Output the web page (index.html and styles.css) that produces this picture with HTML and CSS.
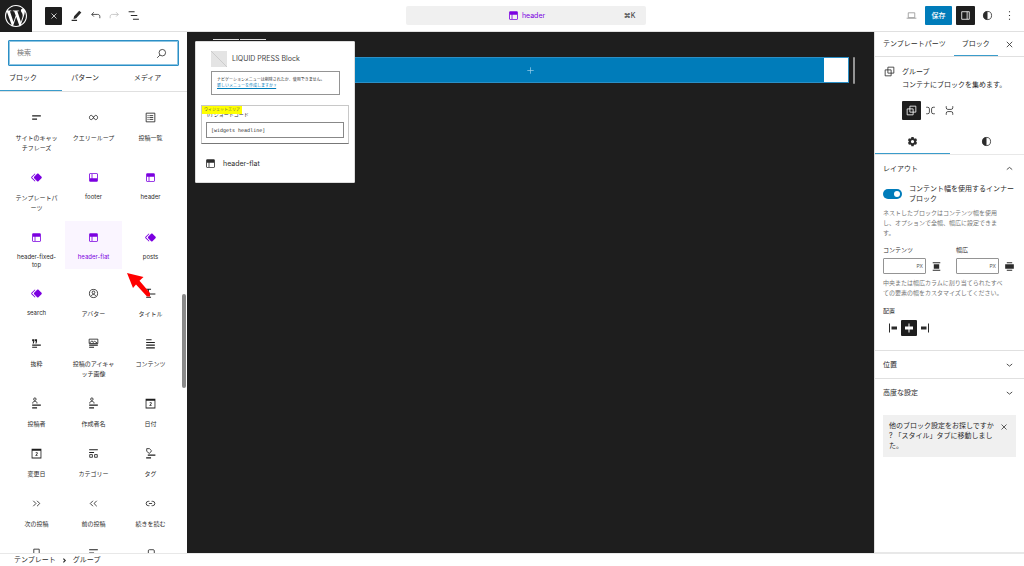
FILE: index.html
```html
<!DOCTYPE html>
<html lang="ja">
<head>
<meta charset="utf-8">
<title>header</title>
<link rel="stylesheet" href="styles.css">
</head>
<body>
<svg class="sprite" aria-hidden="true">
  <symbol id="wp" viewBox="0 0 24 24"><path d="M21.469 6.825c.84 1.537 1.318 3.3 1.318 5.175 0 3.979-2.156 7.456-5.363 9.325l3.295-9.527c.615-1.54.82-2.771.82-3.864 0-.405-.026-.78-.07-1.11m-7.981.105c.647-.03 1.232-.105 1.232-.105.582-.075.514-.93-.067-.899 0 0-1.755.135-2.88.135-1.064 0-2.85-.15-2.85-.15-.585-.03-.661.855-.075.885 0 0 .54.061 1.125.09l1.68 4.605-2.37 7.08L5.354 6.9c.649-.03 1.234-.1 1.234-.1.585-.075.516-.93-.065-.896 0 0-1.746.138-2.874.138-.2 0-.438-.008-.69-.015C4.911 3.15 8.235 1.215 12 1.215c2.809 0 5.365 1.072 7.286 2.833-.046-.003-.091-.009-.141-.009-1.06 0-1.812.923-1.812 1.914 0 .89.513 1.643 1.06 2.531.411.72.89 1.643.89 2.977 0 .915-.354 1.994-.821 3.479l-1.075 3.585-3.9-11.61.001.014zM12 22.784c-1.059 0-2.081-.153-3.048-.437l3.237-9.406 3.315 9.087c.024.053.05.101.078.149-1.12.393-2.325.609-3.582.609M1.211 12c0-1.564.336-3.05.935-4.39L7.29 21.709C3.694 19.96 1.212 16.271 1.211 12M12 0C5.385 0 0 5.385 0 12s5.385 12 12 12 12-5.385 12-12S18.615 0 12 0"/></symbol>
  <symbol id="x" viewBox="0 0 24 24"><path class="ln" d="M7 7l10 10M17 7L7 17"/></symbol>
  <symbol id="pencil" viewBox="0 0 24 24"><path d="M17 3l4 3.500-9.500 10.500-5 1.500 1-5zM3 20h10v2H3z"/></symbol>
  <symbol id="undo" viewBox="0 0 24 24"><path class="ln" d="M9 6L5 10l4 4M5 10H16c3 0 4 2 4 4v3"/></symbol>
  <symbol id="redo" viewBox="0 0 24 24"><path class="ln" d="M15 6l4 4-4 4M19 10H8c-3 0-4 2-4 4v3"/></symbol>
  <symbol id="outline" viewBox="0 0 24 24"><path d="M3 4h11v2H3zM7 11h12v2H7zM11 18h11v2H11z"/></symbol>
  <symbol id="header" viewBox="0 0 24 24"><path fill-rule="evenodd" d="M18.500 10.500H10v8h8a.5.5 0 00.5-.5v-7.500zm-10 0h-3V18a.5.5 0 00.5.5h2.500v-8zM6 4h12a2 2 0 012 2v12a2 2 0 01-2 2H6a2 2 0 01-2-2V6a2 2 0 012-2z"/></symbol>
  <symbol id="footer" viewBox="0 0 24 24"><path fill-rule="evenodd" d="M18 5.500h-8v8h8.500V6a.5.5 0 00-.5-.5zm-9.500 8h-3V6a.5.5 0 01.5-.5h2.500v8zM6 4h12a2 2 0 012 2v12a2 2 0 01-2 2H6a2 2 0 01-2-2V6a2 2 0 012-2z"/></symbol>
  <symbol id="part" viewBox="0 0 24 24"><path d="M21.300 10.800l-5.600-5.600c-.7-.7-1.800-.7-2.500 0l-5.600 5.600c-.7.7-.7 1.800 0 2.500l5.600 5.600c.3.3.8.5 1.200.5s.9-.2 1.200-.5l5.600-5.600c.8-.7.8-1.900.1-2.500zm-17.600 1L10 5.500l-1-1-6.300 6.300c-.7.7-.7 1.800 0 2.500L9 19.500l1.100-1.100-6.300-6.300c-.2 0-.2-.2-.1-.3z"/></symbol>
  <symbol id="tagline" viewBox="0 0 24 24"><path d="M4 8h16v2H4zM4 14h9v2H4z"/></symbol>
  <symbol id="loop" viewBox="0 0 24 24"><path class="ln" d="M8 8c-2.200 0-3.500 1.800-3.500 4s1.300 4 3.500 4c3.500 0 4.500-8 8-8 2.200 0 3.500 1.800 3.500 4s-1.300 4-3.500 4c-3.500 0-4.500-8-8-8z"/></symbol>
  <symbol id="list" viewBox="0 0 24 24"><path class="ln" d="M4 4h16v16H4zM10 8.500h7M10 12h7M10 15.500h7M6.500 8.500h2M6.500 12h2M6.500 15.500h2"/></symbol>
  <symbol id="avatar" viewBox="0 0 24 24"><g class="ln"><circle cx="12" cy="12" r="7.500"/><circle cx="12" cy="10" r="2.500"/><path d="M8 17c0-2.500 2-3 4-3s4 .5 4 3"/></g></symbol>
  <symbol id="title" viewBox="0 0 24 24"><path d="M4 3h9v2H9v7H7V5H4zM9 12h12v2H9zM4 18h9v2H4z"/></symbol>
  <symbol id="excerpt" viewBox="0 0 24 24"><path d="M4 4h4v4l-1 4H5l1-4H4zM9 4h4v4l-1 4h-2l1-4H9zM4 14h16v2H4zM4 18h9v2H4z"/></symbol>
  <symbol id="featured" viewBox="0 0 24 24"><path class="ln" d="M4 4h16v8H4zM5 11l4-4 2 3 3-2 5 3"/><path d="M4 14h16v2H4zM4 18h9v2H4z"/></symbol>
  <symbol id="content" viewBox="0 0 24 24"><path d="M4 4h10v2H4zM4 9h16v2H4zM4 14h16v2H4zM4 19h16v2H4z"/></symbol>
  <symbol id="author" viewBox="0 0 24 24"><g class="ln"><circle cx="9" cy="4" r="2.300"/><path d="M5 12c0-3 1.500-4 4-4s4 1 4 4"/></g><path d="M4 14h16v2H4zM4 19h9v2H4z"/></symbol>
  <symbol id="date" viewBox="0 0 24 24"><path fill-rule="evenodd" d="M3 3h18v18H3zM4.500 7v12.500h15V7z"/><path class="ln" d="M10.500 10.500h3v2l-3 3h3.500"/></symbol>
  <symbol id="category" viewBox="0 0 24 24"><path d="M4 4h16v2H4zM4 9h9v2H4z"/><path class="ln" d="M5 14h5v5H5zM14 14h5v5h-5z"/></symbol>
  <symbol id="tag" viewBox="0 0 24 24"><path class="ln" d="M5 3h5l4 4-4 5-5-4z"/><path d="M7 14h14v2H7zM4 19h9v2H4z"/></symbol>
  <symbol id="next" viewBox="0 0 24 24"><path class="ln" d="M6 7l5 5-5 5M13 7l5 5-5 5"/></symbol>
  <symbol id="prev" viewBox="0 0 24 24"><path class="ln" d="M11 7l-5 5 5 5M18 7l-5 5 5 5"/></symbol>
  <symbol id="link" viewBox="0 0 24 24"><path class="ln" d="M10 8H8a4 4 0 000 8h2M14 8h2a4 4 0 010 8h-2M9 12h6"/></symbol>
  <symbol id="bookmark" viewBox="0 0 24 24"><path class="ln" d="M7 4h10v16l-5-4-5 4z"/></symbol>
  <symbol id="lines" viewBox="0 0 24 24"><path d="M4 4h16v2H4zM4 10h9v2H4z"/></symbol>
  <symbol id="bubble" viewBox="0 0 24 24"><path class="ln" d="M8 16V7q0-2 2-2h7q2 0 2 2v9z"/></symbol>
  <symbol id="search" viewBox="0 0 24 24"><g class="ln"><circle cx="13.500" cy="10.500" r="6"/><path d="M9 15l-5 5"/></g></symbol>
  <symbol id="laptop" viewBox="0 0 24 24"><path class="ln" d="M6 7h12v9H6zM3 17h18"/></symbol>
  <symbol id="sidebar" viewBox="0 0 24 24"><path class="ln" d="M5 5h14v14H5zM15 5v14"/></symbol>
  <symbol id="contrast" viewBox="0 0 24 24"><circle class="ln" cx="12" cy="12" r="7.500"/><path d="M12 4a8 8 0 000 16z"/></symbol>
  <symbol id="dots" viewBox="0 0 24 24"><path d="M11 4h2v2h-2zM11 11h2v2h-2zM11 18h2v2h-2z"/></symbol>
  <symbol id="group" viewBox="0 0 24 24"><path class="ln" d="M9 4h11v11H9zM4 9h11v11H4z"/></symbol>
  <symbol id="row" viewBox="0 0 24 24"><path class="ln" d="M4 6h3q3 0 3 3v6q0 3-3 3H4M20 6h-3q-3 0-3 3v6q0 3 3 3h3"/></symbol>
  <symbol id="stack" viewBox="0 0 24 24"><path class="ln" d="M6 4v3q0 3 3 3h6q3 0 3-3V4M6 20v-3q0-3 3-3h6q3 0 3 3v3"/></symbol>
  <symbol id="gear" viewBox="0 0 24 24"><path fill-rule="evenodd" d="M10 3.500h4l.6 2.300 1.600.9L18.500 6l2 3.500-1.600 1.800v1.500l1.600 1.700-2 3.500-2.300-.6-1.600.9-.6 2.300h-4l-.6-2.300-1.600-.9-2.300.6-2-3.500 1.600-1.700v-1.500L3.500 9.500l2-3.500 2.300.7 1.600-.9zM12 9a3 3 0 100 6 3 3 0 000-6z"/></symbol>
  <symbol id="up" viewBox="0 0 24 24"><path class="ln" d="M7 14l5-4 5 4"/></symbol>
  <symbol id="down" viewBox="0 0 24 24"><path class="ln" d="M7 11l5 4 5-4"/></symbol>
  <symbol id="right" viewBox="0 0 24 24"><path class="ln bold" d="M9 7l5 5-5 5"/></symbol>
  <symbol id="jc" viewBox="0 0 24 24"><path d="M5 4h14v2H5zM5 18h14v2H5zM7 8h10v8H7z"/></symbol>
  <symbol id="wide" viewBox="0 0 24 24"><path d="M7 4h10v2H7zM7 18h10v2H7zM4 8h16v8H4z"/></symbol>
  <symbol id="jleft" viewBox="0 0 24 24"><path d="M4 3h2v18H4zM9 9h11v6H9z"/></symbol>
  <symbol id="jmid" viewBox="0 0 24 24"><path d="M11 3h2v18h-2zM4 9h16v6H4z"/></symbol>
  <symbol id="jright" viewBox="0 0 24 24"><path d="M18 3h2v18h-2zM4 9h11v6H4z"/></symbol>
  <symbol id="plus" viewBox="0 0 24 24"><path class="ln" d="M12 5v14M5 12h14"/></symbol>
</svg>

<div class="editor">
  <header class="topbar">
    <a class="logo" href="#" aria-label="WordPress"><svg><use href="#wp"/></svg></a>
    <div class="tools">
      <button class="btn dark close" aria-label="閉じる"><svg><use href="#x"/></svg></button>
      <button class="btn" aria-label="編集"><svg><use href="#pencil"/></svg></button>
      <button class="btn" aria-label="元に戻す"><svg><use href="#undo"/></svg></button>
      <button class="btn faded" aria-label="やり直す"><svg><use href="#redo"/></svg></button>
      <button class="btn" aria-label="リスト表示"><svg><use href="#outline"/></svg></button>
    </div>
    <div class="center">
      <button class="command"><span></span><span class="doc"><svg><use href="#header"/></svg>header</span><span class="key">⌘K</span></button>
    </div>
    <div class="actions">
      <button class="btn dim" aria-label="表示"><svg><use href="#laptop"/></svg></button>
      <button class="save">保存</button>
      <button class="btn dark" aria-label="設定"><svg><use href="#sidebar"/></svg></button>
      <button class="btn" aria-label="スタイル"><svg><use href="#contrast"/></svg></button>
      <button class="btn" aria-label="オプション"><svg><use href="#dots"/></svg></button>
    </div>
  </header>

  <div class="body">
    <aside class="library">
      <label class="searchbox"><input type="text" placeholder="検索" aria-label="検索"><svg><use href="#search"/></svg></label>
      <nav class="libtabs">
        <button class="on">ブロック</button><button>パターン</button><button>メディア</button>
      </nav>
      <div class="tiles">
        <button class="tile"><svg><use href="#tagline"/></svg><span>サイトのキャッ<br>チフレーズ</span></button>
        <button class="tile"><svg><use href="#loop"/></svg><span>クエリーループ</span></button>
        <button class="tile"><svg><use href="#list"/></svg><span>投稿一覧</span></button>
        <button class="tile part"><svg><use href="#part"/></svg><span>テンプレートパ<br>ーツ</span></button>
        <button class="tile part latin"><svg><use href="#footer"/></svg><span>footer</span></button>
        <button class="tile part latin"><svg><use href="#header"/></svg><span>header</span></button>
        <button class="tile part latin"><svg><use href="#header"/></svg><span>header-fixed-<br>top</span></button>
        <button class="tile part latin current"><svg><use href="#header"/></svg><span>header-flat</span></button>
        <button class="tile part latin"><svg><use href="#part"/></svg><span>posts</span></button>
        <button class="tile part latin"><svg><use href="#part"/></svg><span>search</span></button>
        <button class="tile"><svg><use href="#avatar"/></svg><span>アバター</span></button>
        <button class="tile"><svg><use href="#title"/></svg><span>タイトル</span></button>
        <button class="tile"><svg><use href="#excerpt"/></svg><span>抜粋</span></button>
        <button class="tile"><svg><use href="#featured"/></svg><span>投稿のアイキャ<br>ッチ画像</span></button>
        <button class="tile"><svg><use href="#content"/></svg><span>コンテンツ</span></button>
        <button class="tile"><svg><use href="#author"/></svg><span>投稿者</span></button>
        <button class="tile"><svg><use href="#author"/></svg><span>作成者名</span></button>
        <button class="tile"><svg><use href="#date"/></svg><span>日付</span></button>
        <button class="tile"><svg><use href="#date"/></svg><span>変更日</span></button>
        <button class="tile"><svg><use href="#category"/></svg><span>カテゴリー</span></button>
        <button class="tile"><svg><use href="#tag"/></svg><span>タグ</span></button>
        <button class="tile"><svg><use href="#next"/></svg><span>次の投稿</span></button>
        <button class="tile"><svg><use href="#prev"/></svg><span>前の投稿</span></button>
        <button class="tile"><svg><use href="#link"/></svg><span>続きを読む</span></button>
        <button class="tile" aria-label="コメント"><svg><use href="#bookmark"/></svg></button>
        <button class="tile" aria-label="一覧"><svg><use href="#lines"/></svg></button>
        <button class="tile" aria-label="返信"><svg><use href="#bubble"/></svg></button>
      </div>
      <div class="thumb"></div>
      <svg class="arrow" viewBox="0 0 24 24"><path d="M0 0l16.500 4-4 3.700 10.500 12.300v3.500h-3L9 11.500 6 15z"/></svg>
    </aside>

    <main class="canvas">
      <div class="blockbar"><i></i><i></i></div>
      <div class="band"><div class="fill"><svg><use href="#plus"/></svg></div><div class="blank"></div></div>
      <div class="handle"></div>
      <section class="preview">
        <div class="site"><svg class="ph" viewBox="0 0 16 16"><path d="M0 0l16 16"/></svg>LIQUID PRESS Block</div>
        <div class="navnote">ナビゲーションメニューは削除されたか、使用できません。<br><a href="#">新しいメニューを作成しますか ?</a></div>
        <div class="widget">
          <span class="mark">ウィジェットエリア</span>
          <div class="short">[/] ショートコード</div>
          <div class="code">[widgets headline]</div>
        </div>
        <div class="pname"><svg><use href="#header"/></svg>header-flat</div>
      </section>
    </main>

    <aside class="settings">
      <nav class="ptabs"><button>テンプレートパーツ</button><button class="on">ブロック</button><button class="btn px" aria-label="閉じる"><svg><use href="#x"/></svg></button></nav>
      <div class="card">
        <svg><use href="#group"/></svg>
        <div>
          <h2>グループ</h2>
          <p>コンテナにブロックを集めます。</p>
          <div class="variants">
            <button class="btn dark" aria-label="グループ"><svg><use href="#group"/></svg></button><button class="btn" aria-label="横並び"><svg><use href="#row"/></svg></button><button class="btn" aria-label="縦積み"><svg><use href="#stack"/></svg></button>
          </div>
        </div>
      </div>
      <nav class="itabs"><button class="on" aria-label="設定"><svg><use href="#gear"/></svg></button><button aria-label="スタイル"><svg><use href="#contrast"/></svg></button></nav>
      <section class="panel">
        <button class="phead">レイアウト<svg><use href="#up"/></svg></button>
        <label class="toggle"><input type="checkbox" checked><span>コンテント幅を使用するインナー<br>ブロック</span></label>
        <p class="help">ネストしたブロックはコンテンツ幅を使用<br>し、オプションで全幅、幅広に設定できま<br>す。</p>
        <div class="sizes">
          <div class="size"><label for="cw">コンテンツ</label><div><span class="unit"><input id="cw" type="text"><em>PX</em></span><svg><use href="#jc"/></svg></div></div>
          <div class="size"><label for="ww">幅広</label><div><span class="unit"><input id="ww" type="text"><em>PX</em></span><svg><use href="#wide"/></svg></div></div>
        </div>
        <p class="help">中央または幅広カラムに割り当てられたすべ<br>ての要素の幅をカスタマイズしてください。</p>
        <div class="sub">配置</div>
        <div class="just"><button aria-label="左"><svg><use href="#jleft"/></svg></button><button class="on" aria-label="中央"><svg><use href="#jmid"/></svg></button><button aria-label="右"><svg><use href="#jright"/></svg></button></div>
      </section>
      <section class="panel"><button class="phead">位置<svg><use href="#down"/></svg></button></section>
      <section class="panel last"><button class="phead">高度な設定<svg><use href="#down"/></svg></button></section>
      <div class="notice"><span>他のブロック設定をお探しですか<br>? 「スタイル」タブに移動しまし<br>た。</span><button aria-label="閉じる"><svg><use href="#x"/></svg></button></div>
    </aside>
  </div>

  <footer class="crumbs"><a href="#">テンプレート</a><svg><use href="#right"/></svg><span>グループ</span></footer>
</div>
</body>
</html>
```
FILE: styles.css
```css
* { box-sizing: border-box; margin: 0; padding: 0; }
body { font: 7px/10px Inter, "Noto Sans CJK JP", sans-serif; color: #2b2b2b; background: #fff; }
button, input { font: inherit; color: inherit; background: none; border: 0; outline: 0; }
svg { width: 13px; height: 13px; fill: currentColor; flex: none; display: block; }
.ln { fill: none; stroke: currentColor; stroke-width: 1.5; }
.bold { stroke-width: 3; }
.sprite { position: absolute; width: 0; height: 0; }
.editor { height: 100vh; display: flex; flex-direction: column; overflow: hidden; }

.topbar { flex: none; height: 32px; display: flex; align-items: center; border-bottom: 1px solid #e0e0e0; }
.logo { width: 32px; height: 32px; background: #1e1e1e; color: #fff; display: grid; place-items: center; }
.logo svg { width: 22px; height: 22px; }
.tools { display: flex; align-items: center; margin-left: 13px; padding-right: 6px; }
.btn { width: 19px; height: 19px; display: grid; place-items: center; border-radius: 1px; flex: none; }
.dark { background: #1e1e1e; color: #fff; }
.close { width: 17px; height: 18px; margin-right: 5px; }
.close svg { width: 12px; height: 12px; }
.faded { color: #bbb; }
.dim { color: #949494; }
.center { flex: 1; display: flex; justify-content: center; }
.command { width: 240px; height: 19px; border-radius: 2px; background: #f0f0f0; display: grid; grid-template-columns: 1fr auto 1fr; align-items: center; padding: 0 10px 0 11px; }
.doc { display: flex; align-items: center; gap: 2px; color: #7b00e0; }
.key { text-align: right; color: #2f2f2f; }
.actions { display: flex; align-items: center; padding-right: 5px; gap: 3px; }
.save { width: 27px; height: 19px; background: #007cba; color: #fff; border-radius: 1px; margin: 0 1px; font-weight: 500; }

.body { flex: 1; min-height: 0; display: flex; }
.library { position: relative; width: 187px; flex: none; overflow: hidden; padding-top: 8px; }
.searchbox { display: flex; align-items: center; height: 26px; margin: 0 8px; border: 1px solid #2b8fc6; box-shadow: inset 0 0 0 1px #8ec5e2; border-radius: 1px; padding: 0 10px 0 8px; }
.searchbox input { flex: 1; min-width: 0; }
.searchbox input::placeholder { color: #757575; opacity: 1; }
.libtabs { display: grid; grid-template-columns: repeat(3, 1fr); border-bottom: 1px solid #e0e0e0; }
.libtabs button { height: 25px; text-align: left; padding-left: 9px; border-bottom: 1px solid transparent; }
.libtabs .on { border-color: #3a9ccb; }
.tiles { display: grid; grid-template-columns: repeat(3, 1fr); row-gap: 8px; margin: 9px 8px 0; }
.tile { display: flex; flex-direction: column; align-items: center; padding-top: 10px; gap: 9px; min-height: 40px; font-size: 6px; line-height: 10px; }
.tile svg { color: #1e1e1e; }
.latin { line-height: 8px; }
.part svg { color: #7b00e0; }
.current { background: #faf5ff; color: #7b00e0; }
.thumb { position: absolute; right: 1px; top: 262px; width: 4px; height: 94px; border-radius: 2px; background: #8a8a8a; }
.arrow { position: absolute; left: 127px; top: 241px; width: 24px; height: 24px; color: #f00; }

.canvas { position: relative; flex: 1; min-width: 0; background: #1e1e1e; padding: 25px 19px 0 8px; display: flex; gap: 4px; align-items: flex-start; }
.band { flex: 1; height: 26px; display: flex; border: 1px solid #2b8fc6; }
.fill { flex: 1; background: #007cba; color: #9fd0ea; display: flex; align-items: center; justify-content: flex-end; }
.fill svg { width: 11px; height: 11px; margin-right: 288px; }
.blank { width: 24px; background: #fff; }
.handle { width: 2px; height: 27px; background: #949494; border-radius: 1px; }
.blockbar { position: absolute; left: 26px; top: 7px; display: flex; gap: 1px; }
.blockbar i { width: 26px; height: 1px; background: #ddd; }
.preview { position: absolute; left: 8px; top: 9px; width: 160px; height: 142px; background: #fff; border-radius: 1px; border: 1px solid #ddd; padding: 9px 5px; }
.site { display: flex; align-items: center; gap: 5px; margin-left: 10px; color: #444; line-height: 16px; }
.ph { width: 16px; height: 16px; background: #e4e4e4; stroke: #ccc; stroke-width: 1; }
.navnote { margin: 4px 9px 0 10px; border: 1px solid #949494; height: 24px; padding: 5px; font-size: 4px; line-height: 6px; white-space: nowrap; }
.navnote a { color: #007cba; }
.widget { position: relative; margin-top: 10px; border: 1px solid #c8c8c8; border-bottom-color: #777; height: 39px; padding: 4px 4px; }
.mark { position: absolute; left: 0; top: 0; background: #ff0; color: #555; font-size: 4px; line-height: 8px; padding: 0 2px; width: 40px; white-space: nowrap; }
.short { font-size: 5px; line-height: 8px; padding-left: 1px; white-space: nowrap; margin-bottom: 4px; }
.code { border: 1px solid #888; height: 16px; padding-left: 4px; font: 5px/14px "DejaVu Sans Mono", monospace; }
.pname { display: flex; align-items: center; gap: 6px; margin: 13px 0 0 3px; }

.settings { width: 150px; flex: none; border-left: 1px solid #e0e0e0; border-bottom: 1px solid #e8e8e8; overflow: hidden; }
.ptabs { display: flex; height: 25px; border-bottom: 1px solid #e0e0e0; }
.ptabs button { padding: 0 8px; white-space: nowrap; }
.ptabs .on { border-bottom: 1px solid #3a9ccb; }
.ptabs .px { margin: 3px 5px 0 auto; padding: 0; }
.card { display: flex; gap: 6px; padding: 8px 8px 9px; }
.card h2 { font-size: 7px; line-height: 13px; font-weight: 400; }
.card p { line-height: 13px; white-space: nowrap; }
.variants { display: flex; margin-top: 10px; }
.itabs { display: grid; grid-template-columns: 1fr 1fr; border-bottom: 1px solid #e8e8e8; }
.itabs button { height: 25px; display: grid; place-items: center; border-bottom: 1px solid transparent; }
.itabs .on { border-color: #3a9ccb; }
.panel { border-bottom: 1px solid #e0e0e0; padding: 0 8px; }
.last { border-color: transparent; }
.phead { width: 100%; height: 27px; display: flex; justify-content: space-between; align-items: center; text-align: left; }
.toggle { display: flex; gap: 7px; align-items: center; margin-top: 2px; white-space: nowrap; }
.toggle input { appearance: none; width: 19px; height: 10px; border-radius: 5px; background: #007cba; flex: none; display: flex; justify-content: flex-end; align-items: center; padding-right: 2px; }
.toggle input::after { content: ""; width: 6px; height: 6px; border-radius: 50%; background: #fff; }
.help { font-size: 6px; line-height: 10px; color: #757575; white-space: nowrap; margin: 4px 0; }
.sizes { display: grid; grid-template-columns: 1fr 1fr; gap: 13px; margin-top: 8px; }
.size label { display: block; font-size: 6px; line-height: 8px; margin-bottom: 4px; }
.size > div { display: flex; align-items: center; gap: 4px; }
.unit { width: 43px; flex: none; height: 16px; border: 1px solid #949494; border-radius: 1px; display: flex; align-items: center; padding-right: 2px; }
.unit input { width: 100%; min-width: 0; }
.unit em { font: 5px/8px Inter, sans-serif; color: #555; }
.sub { font-size: 6px; line-height: 8px; margin: 9px 0 5px; }
.just { display: flex; padding: 0 2px; margin-bottom: 14px; }
.just button { width: 16px; height: 16px; display: grid; place-items: center; border-radius: 1px; }
.just svg { width: 12px; height: 12px; }
.just .on { background: #1e1e1e; color: #fff; }
.notice { margin: 8px 8px; background: #f0f0f0; display: flex; justify-content: space-between; align-items: flex-start; padding: 6px; white-space: nowrap; }
.notice svg { width: 12px; height: 12px; }

.crumbs { flex: none; height: 13px; display: flex; align-items: center; gap: 4px; padding-left: 14px; border-top: 1px solid #e8e8e8; }
.crumbs a { color: inherit; text-decoration: none; }
.crumbs svg { width: 9px; height: 9px; }
```
